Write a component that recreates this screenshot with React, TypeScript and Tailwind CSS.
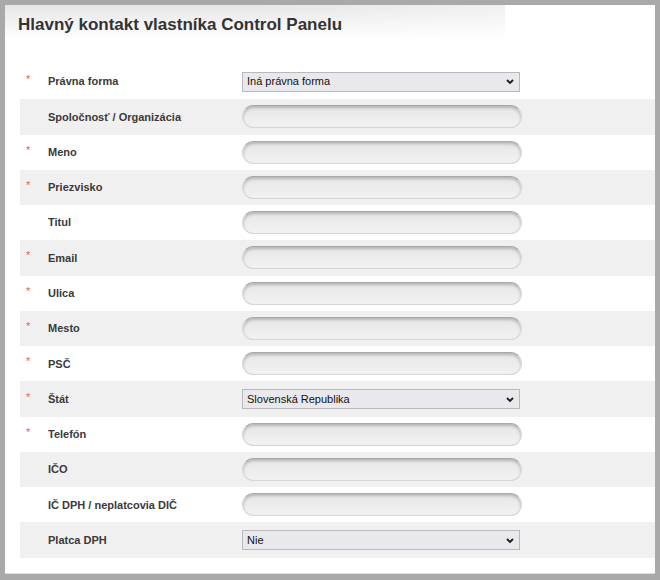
import React from "react";

type Row = { label: string; req: boolean; kind: "input" | "select"; value?: string };

const rows: Row[] = [
  { label: "Právna forma", req: true, kind: "select", value: "Iná právna forma" },
  { label: "Spoločnosť / Organizácia", req: false, kind: "input" },
  { label: "Meno", req: true, kind: "input" },
  { label: "Priezvisko", req: true, kind: "input" },
  { label: "Titul", req: false, kind: "input" },
  { label: "Email", req: true, kind: "input" },
  { label: "Ulica", req: true, kind: "input" },
  { label: "Mesto", req: true, kind: "input" },
  { label: "PSČ", req: true, kind: "input" },
  { label: "Štát", req: true, kind: "select", value: "Slovenská Republika" },
  { label: "Telefón", req: true, kind: "input" },
  { label: "IČO", req: false, kind: "input" },
  { label: "IČ DPH / neplatcovia DIČ", req: false, kind: "input" },
  { label: "Platca DPH", req: false, kind: "select", value: "Nie" },
];

function Chevron() {
  return (
    <svg width="10" height="7" viewBox="0 0 10 7" className="shrink-0">
      <path d="M2 2 L5 5 L8 2" fill="none" stroke="#1a1a1a" strokeWidth="1.8" />
    </svg>
  );
}

function SelectBox({ value }: { value: string }) {
  return (
    <div className="flex h-[20px] w-[278px] items-center justify-between border border-[#b9b9bc] bg-[#e9e9ed] pl-[4px] pr-[4px] text-[11px] text-[#111]">
      <span className="leading-none">{value}</span>
      <Chevron />
    </div>
  );
}

function TextBox() {
  return (
    <div className="h-[23px] w-[280px] rounded-full border border-[#d6d6d6] border-t-[#a9a9a9] bg-gradient-to-b from-[#e6e6e6] to-[#f2f2f2] shadow-[inset_0_2px_3px_rgba(0,0,0,0.22)]" />
  );
}

export default function App() {
  return (
    <div
      className="h-[580px] w-[660px] bg-[#a9a9a9] px-[5px] pb-[6px] pt-[5px]"
      style={{ fontFamily: '"Liberation Sans", Arial, sans-serif' }}
    >
      <div className="flex h-full flex-col border-b-[1px] border-[#dcdcdc] bg-white">
        <div className="relative h-[33px] w-[500px] bg-gradient-to-b from-[#e6e6e6] to-[#fefefe]">
          <div className="absolute inset-0 bg-gradient-to-r from-transparent via-transparent to-white/40" />
          <h1 className="relative pl-[13px] pt-[11px] text-[17px] font-bold leading-[17px] text-[#333]">
            Hlavný kontakt vlastníka Control Panelu
          </h1>
        </div>
        <div className="mt-[26px] flex flex-col">
          {rows.map((r, i) => (
            <div
              key={r.label}
              className={`ml-[15px] flex h-[35.28px] items-center ${i % 2 === 1 ? "bg-[#f0f0f0]" : "bg-white"}`}
            >
              <div className="w-[28px] pl-[6px] text-[11px] leading-none text-[#e8604e]">
                <span className="relative -top-[2px]">{r.req ? "*" : ""}</span>
              </div>
              <div className="w-[194px] text-[11px] font-bold text-[#3a3a3a]">{r.label}</div>
              {r.kind === "select" ? <SelectBox value={r.value || ""} /> : <TextBox />}
            </div>
          ))}
        </div>
      </div>
    </div>
  );
}
